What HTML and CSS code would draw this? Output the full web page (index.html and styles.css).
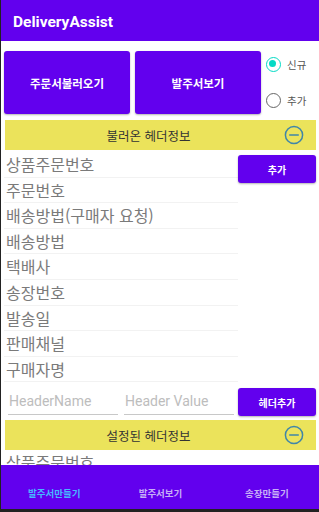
FILE: index.html
```html
<!DOCTYPE html>
<html lang="ko">
  <head>
    <meta charset="UTF-8" />
    <meta name="viewport" content="width=device-width, initial-scale=1.0" />
    <title>DeliveryAssist</title>
    <link rel="stylesheet" href="styles.css">
  </head>
  <body>
    <div class="screen">
      <header class="app-bar">DeliveryAssist</header>
      <main class="content">
        <div class="top-row">
          <button class="btn big-btn">주문서불러오기</button>
          <button class="btn big-btn">발주서보기</button>
          <div class="radio-group">
            <label class="radio checked"><span class="dot"></span>신규</label>
            <label class="radio"><span class="dot"></span>추가</label>
          </div>
        </div>

        <div class="section-bar">
          <span class="bar-title">불러온 헤더정보</span>
          <svg class="minus" width="20" height="20" viewBox="0 0 20 20">
            <circle cx="10" cy="10" r="8.6" fill="none" stroke="#3f86a8" stroke-width="1.5" />
            <line x1="5.2" y1="10" x2="14.8" y2="10" stroke="#3f86a8" stroke-width="1.5" />
          </svg>
        </div>

        <div class="list-row">
          <ul class="header-list">
            <li>상품주문번호</li>
            <li>주문번호</li>
            <li>배송방법(구매자 요청)</li>
            <li>배송방법</li>
            <li>택배사</li>
            <li>송장번호</li>
            <li>발송일</li>
            <li>판매채널</li>
            <li>구매자명</li>
          </ul>
          <button class="btn small-btn add-btn">추가</button>
        </div>

        <div class="input-row">
          <input class="field" type="text" placeholder="HeaderName" />
          <input class="field" type="text" placeholder="Header Value" />
          <button class="btn small-btn">헤더추가</button>
        </div>

        <div class="section-bar second">
          <span class="bar-title">설정된 헤더정보</span>
          <svg class="minus" width="20" height="20" viewBox="0 0 20 20">
            <circle cx="10" cy="10" r="8.6" fill="none" stroke="#3f86a8" stroke-width="1.5" />
            <line x1="5.2" y1="10" x2="14.8" y2="10" stroke="#3f86a8" stroke-width="1.5" />
          </svg>
        </div>
        <ul class="header-list set-list">
          <li>상품주문번호</li>
        </ul>
      </main>
      <nav class="bottom-nav">
        <span class="tab active">발주서만들기</span>
        <span class="tab">발주서보기</span>
        <span class="tab">송장만들기</span>
      </nav>
    </div>
  </body>
</html>
```

FILE: styles.css
```css
* {
  box-sizing: border-box;
}
body {
  margin: 0;
  background-color: #222;
  font-family: Roboto, "Noto Sans CJK KR", sans-serif;
}
.screen {
  display: flex;
  flex-direction: column;
  width: 319px;
  height: 509px;
  margin-left: 1px;
  background-color: #fff;
  overflow: hidden;
}
.app-bar {
  display: flex;
  align-items: center;
  height: 41px;
  flex-shrink: 0;
  padding-left: 12px;
  padding-top: 3px;
  background-color: #6200ee;
  color: #fff;
  font-size: 15.5px;
  font-weight: 700;
}
.content {
  flex: 1;
  overflow: hidden;
  padding: 10px 4px 0 3px;
}
.btn {
  border: none;
  outline: none;
  border-radius: 3px;
  background-color: #6200ee;
  color: #fff;
  font-family: "Noto Sans CJK KR", sans-serif;
  font-weight: 700;
  box-shadow: 0 1px 2px rgba(0, 0, 0, 0.3);
  padding: 0;
}
.top-row {
  display: flex;
  align-items: stretch;
}
.big-btn {
  width: 126px;
  height: 63px;
  margin-right: 5px;
  font-size: 11.5px;
}
.radio-group {
  display: flex;
  flex-direction: column;
  justify-content: space-between;
  padding: 6px 0 6px 0;
}
.radio {
  display: flex;
  align-items: center;
  font-family: "Noto Sans CJK KR", sans-serif;
  font-size: 10.5px;
  color: #555;
}
.dot {
  position: relative;
  width: 15px;
  height: 15px;
  border: 1.6px solid #666;
  border-radius: 50%;
  margin-right: 6px;
}
.checked .dot {
  border-color: #03dac5;
}
.checked .dot::after {
  content: "";
  position: absolute;
  left: 2.4px;
  top: 2.4px;
  width: 7px;
  height: 7px;
  border-radius: 50%;
  background-color: #03dac5;
}
.section-bar {
  display: flex;
  align-items: center;
  height: 30px;
  margin-top: 6px;
  margin-left: 1px;
  padding-right: 12px;
  background-color: #ebe35b;
}
.section-bar.second {
  margin-top: 4px;
}
.bar-title {
  flex: 1;
  text-align: center;
  font-family: "Noto Sans CJK KR", sans-serif;
  font-size: 12.5px;
  color: #333;
  padding-left: 8px;
}
.list-row {
  display: flex;
  align-items: flex-start;
}
.header-list {
  list-style: none;
  margin: 2px 0 0 0;
  padding: 0;
  width: 234px;
}
.header-list li {
  height: 25.6px;
  line-height: 24px;
  padding-left: 2px;
  border-bottom: 1px solid #f2f2f2;
  font-family: "Noto Sans CJK KR", sans-serif;
  font-size: 16px;
  color: #7a7a7a;
}
.small-btn {
  width: 78px;
  height: 28px;
  font-size: 10px;
}
.add-btn {
  margin-top: 5px;
}
.input-row {
  display: flex;
  align-items: center;
  margin-top: 6px;
}
.field {
  width: 110px;
  height: 26px;
  margin: 0 6px 0 4px;
  padding: 0 0 2px 1px;
  border: none;
  border-bottom: 1px solid #c8c8c8;
  outline: none;
  font-family: Roboto, sans-serif;
  font-size: 14px;
}
.field + .field {
  margin-left: 0;
  margin-right: 4px;
}
.field::placeholder {
  color: #bdbdbd;
}
.set-list {
  margin-top: 0;
}
.bottom-nav {
  display: flex;
  align-items: flex-end;
  height: 44px;
  flex-shrink: 0;
  padding-bottom: 9px;
  background-color: #6200ee;
}
.tab {
  flex: 1;
  text-align: center;
  font-family: "Noto Sans CJK KR", sans-serif;
  font-size: 9.5px;
  font-weight: 700;
  color: #c6aef6;
}
.tab.active {
  color: #46b8ff;
}
```
